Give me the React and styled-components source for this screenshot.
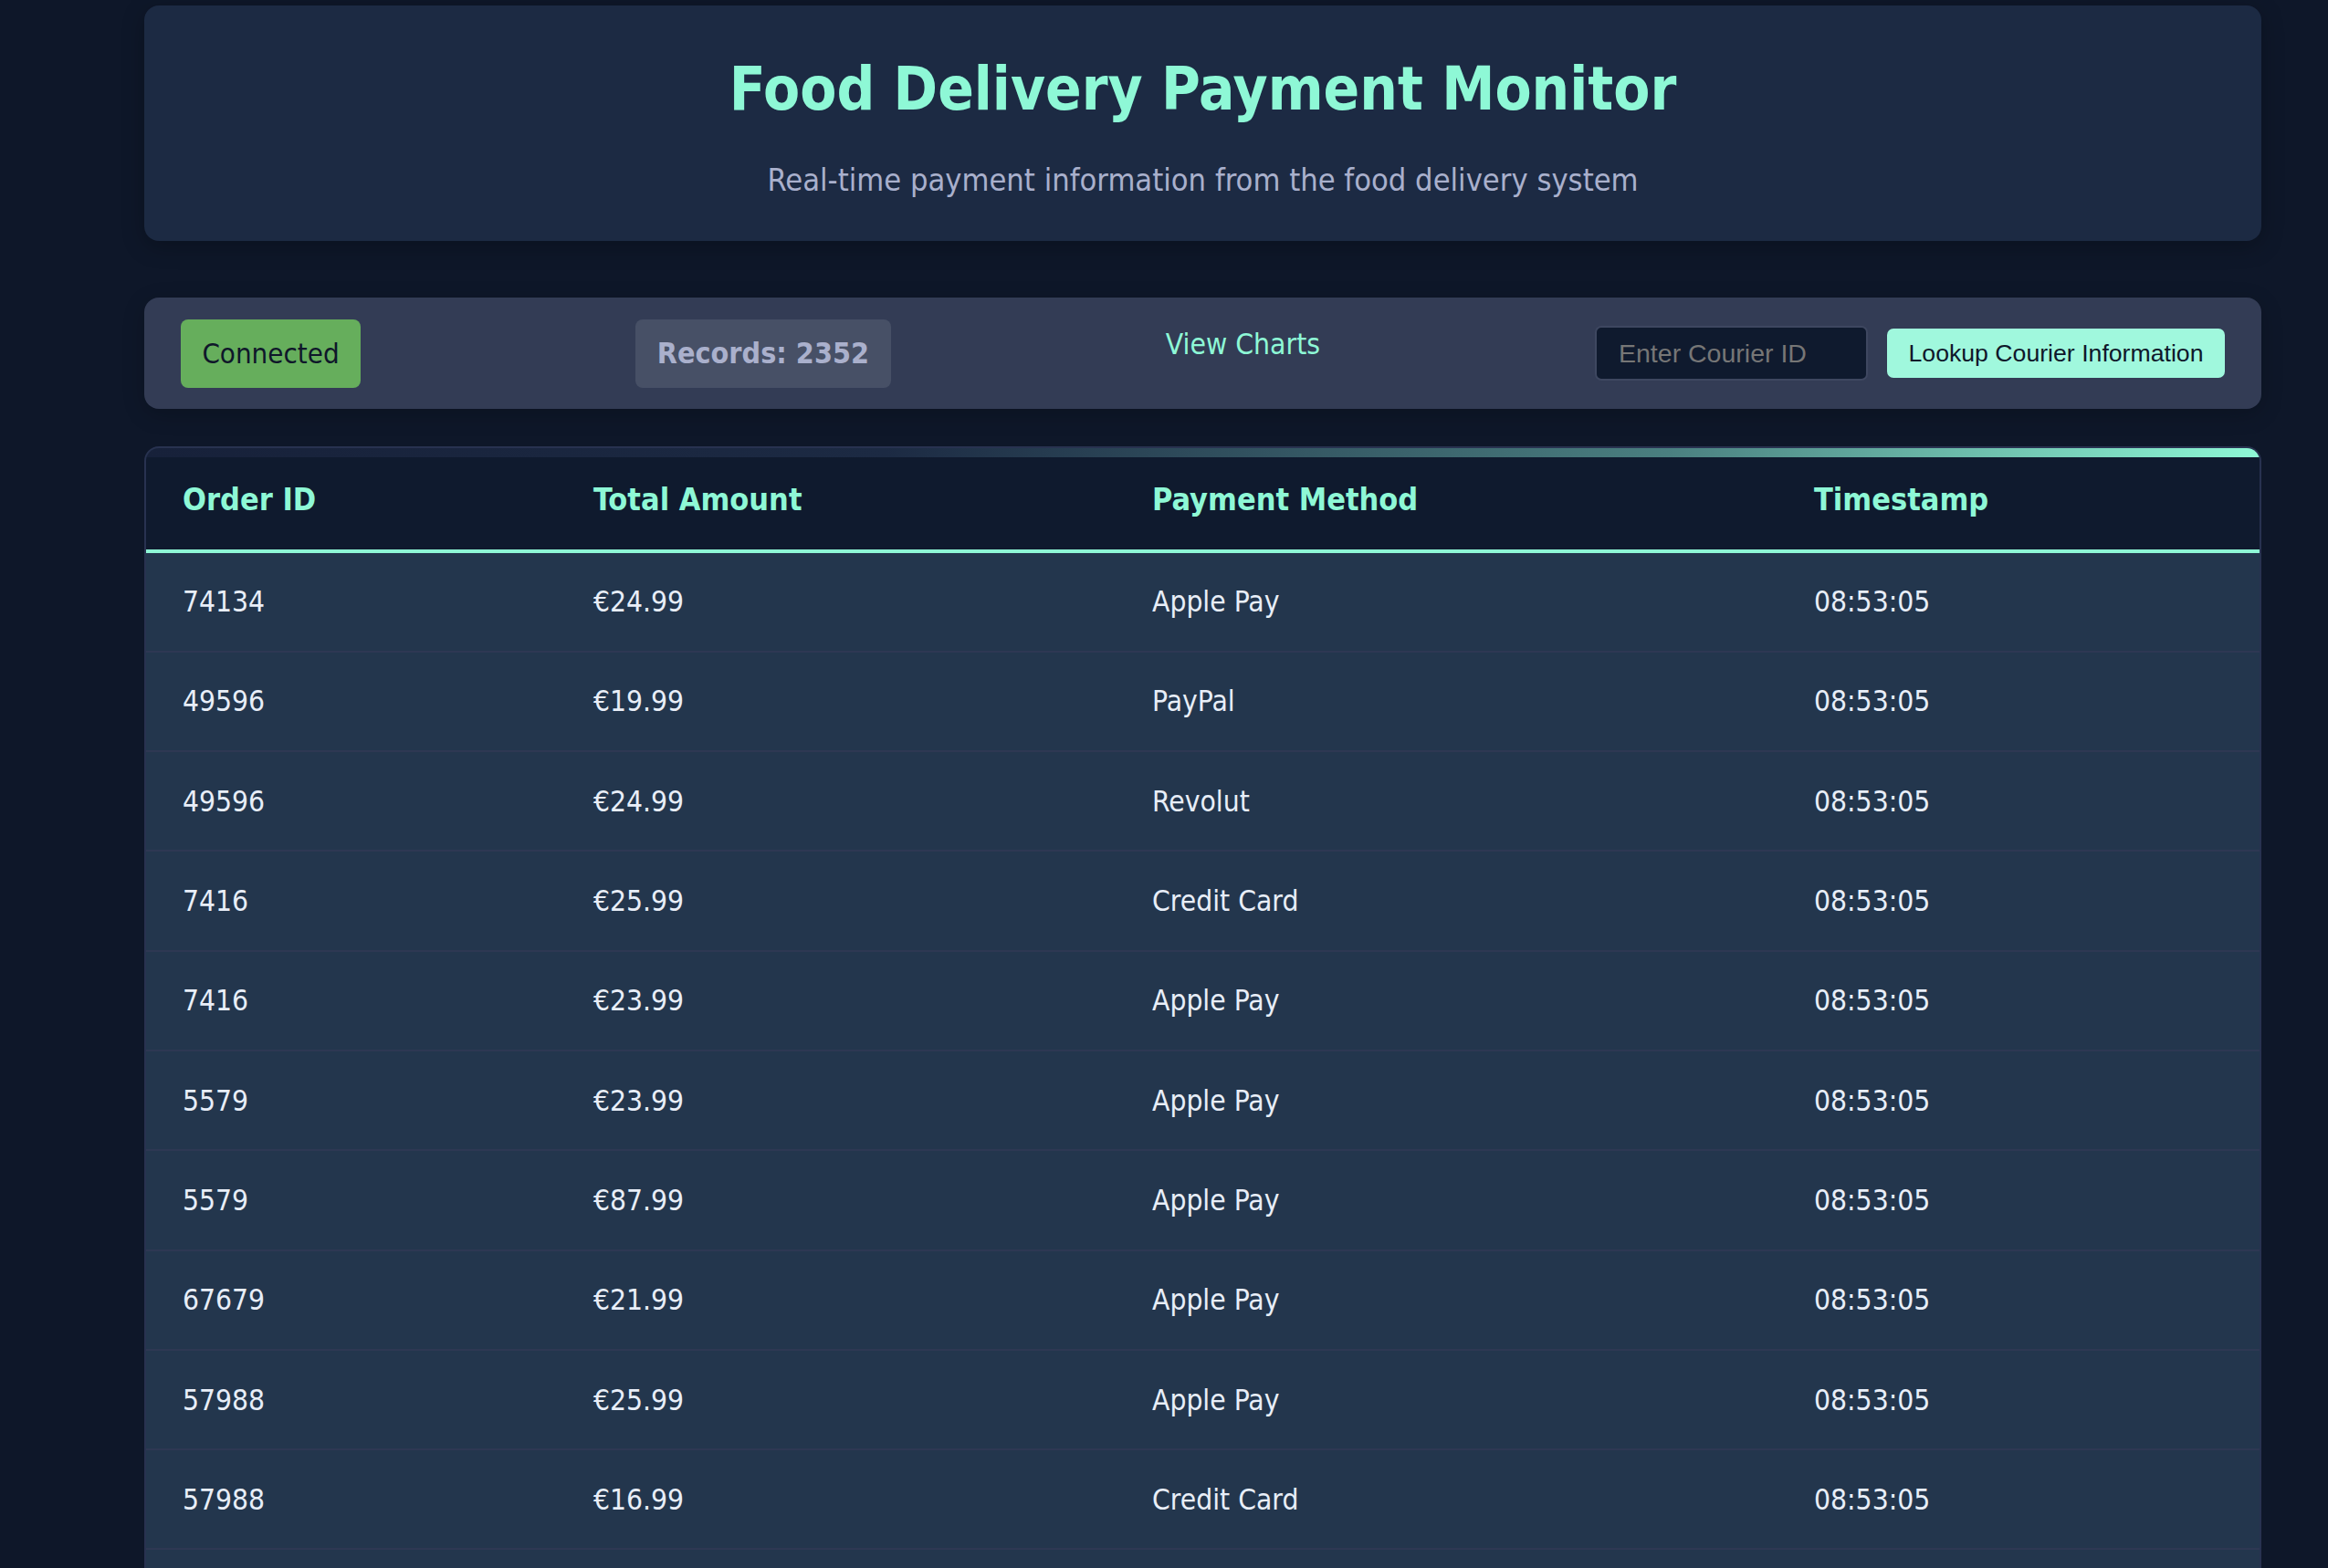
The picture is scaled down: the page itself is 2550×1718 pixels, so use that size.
import React from "react";
import styled, { createGlobalStyle } from "styled-components";

const GlobalStyle = createGlobalStyle`
  html, body { margin: 0; padding: 0; background: #0e1729; }
  body {
    font-family: "DejaVu Sans Condensed", "DejaVu Sans", sans-serif;
    font-stretch: condensed;
    color: #e8eef8;
  }
`;

const Page = styled.div`
  padding: 6px 73px 0 158px;
  display: flex;
  flex-direction: column;
`;

const HeaderCard = styled.header`
  background: #1c2a43;
  border-radius: 16px;
  padding: 54px 40px 47px;
  text-align: center;
  box-shadow: 0 6px 24px rgba(0, 0, 0, 0.25);
`;

const Title = styled.h1`
  margin: 0 0 42px;
  font-size: 65px;
  font-weight: 700;
  color: #8ef8d6;
  line-height: normal;
`;

const Subtitle = styled.p`
  margin: 0;
  font-size: 34.2px;
  color: #a9b0cc;
  line-height: normal;
`;

const ControlBar = styled.div`
  margin-top: 62px;
  background: #333c55;
  border-radius: 16px;
  height: 122px;
  box-sizing: border-box;
  padding: 0 40px;
  display: flex;
  align-items: center;
  justify-content: space-between;
  box-shadow: 0 6px 24px rgba(0, 0, 0, 0.2);
`;

const StatusBadge = styled.div`
  height: 75px;
  width: 197px;
  box-sizing: border-box;
  border-radius: 8px;
  background: #66ae5c;
  color: #0f172a;
  font-size: 31px;
  display: flex;
  align-items: center;
  justify-content: center;
`;

const CountBadge = styled.div`
  height: 75px;
  width: 280px;
  box-sizing: border-box;
  border-radius: 8px;
  background: #475066;
  color: #aab0cc;
  font-size: 32px;
  font-weight: 700;
  display: flex;
  align-items: center;
  justify-content: center;
`;

const ChartLink = styled.a`
  color: #8ef8d6;
  font-size: 31.6px;
  text-decoration: none;
  margin-bottom: 20px;
  cursor: pointer;
`;

const LookupGroup = styled.div`
  display: flex;
  align-items: center;
  gap: 21px;
`;

const CourierInput = styled.input`
  width: 299px;
  height: 60px;
  box-sizing: border-box;
  background: #0f1a2e;
  border: 2px solid #3e4760;
  border-radius: 7px;
  padding: 0 24px;
  font-family: "Liberation Sans", Arial, sans-serif;
  font-size: 28.5px;
  color: #e8eef8;
  outline: none;
  &::placeholder { color: #767676; }
`;

const LookupButton = styled.button`
  width: 370px;
  height: 54px;
  border: none;
  border-radius: 7px;
  background: #a0f8dd;
  color: #0f172a;
  font-family: "Liberation Sans", Arial, sans-serif;
  font-size: 26.67px;
  padding: 0;
  cursor: pointer;
`;

const TableCard = styled.section`
  margin-top: 41px;
  border: 2px solid #283250;
  border-bottom: none;
  border-radius: 16px 16px 0 0;
  overflow: hidden;
  background: #23364d;
`;

const Accent = styled.div`
  height: 10px;
  background: linear-gradient(90deg, #17213a 0%, #1c2a43 35%, #4a7f80 72%, #8ef8d6 100%);
`;

const Table = styled.table`
  width: 100%;
  border-collapse: collapse;
  table-layout: fixed;
`;

const Col = styled.col`
  width: ${(p) => p.$w};
`;

const HeadCell = styled.th`
  background: #0f1a2e;
  color: #8ef8d6;
  font-size: 34px;
  font-weight: 700;
  text-align: left;
  vertical-align: top;
  height: 102.5px;
  box-sizing: border-box;
  padding: 26px 0 0 40px;
  border-bottom: 4px solid #8ef8d6;
`;

const Row = styled.tr`
  background: #23364d;
  border-bottom: 2px solid #2e3853;
`;

const Cell = styled.td`
  height: 107.3px;
  padding: 0 0 0 40px;
  font-size: 31.5px;
  color: #e8eef8;
`;

const rows = [
  ["74134", "€24.99", "Apple Pay", "08:53:05"],
  ["49596", "€19.99", "PayPal", "08:53:05"],
  ["49596", "€24.99", "Revolut", "08:53:05"],
  ["7416", "€25.99", "Credit Card", "08:53:05"],
  ["7416", "€23.99", "Apple Pay", "08:53:05"],
  ["5579", "€23.99", "Apple Pay", "08:53:05"],
  ["5579", "€87.99", "Apple Pay", "08:53:05"],
  ["67679", "€21.99", "Apple Pay", "08:53:05"],
  ["57988", "€25.99", "Apple Pay", "08:53:05"],
  ["57988", "€16.99", "Credit Card", "08:53:05"],
  ["31845", "€22.99", "PayPal", "08:53:05"],
];

export default function App() {
  return (
    <>
      <GlobalStyle />
      <Page>
        <HeaderCard>
          <Title>Food Delivery Payment Monitor</Title>
          <Subtitle>Real-time payment information from the food delivery system</Subtitle>
        </HeaderCard>
        <ControlBar>
          <StatusBadge>Connected</StatusBadge>
          <CountBadge>Records: 2352</CountBadge>
          <ChartLink>View Charts</ChartLink>
          <LookupGroup>
            <CourierInput placeholder="Enter Courier ID" />
            <LookupButton>Lookup Courier Information</LookupButton>
          </LookupGroup>
        </ControlBar>
        <TableCard>
          <Accent />
          <Table>
            <colgroup>
              <Col $w="450px" />
              <Col $w="612px" />
              <Col $w="725px" />
              <Col $w="auto" />
            </colgroup>
            <thead>
              <tr>
                <HeadCell>Order ID</HeadCell>
                <HeadCell>Total Amount</HeadCell>
                <HeadCell>Payment Method</HeadCell>
                <HeadCell>Timestamp</HeadCell>
              </tr>
            </thead>
            <tbody>
              {rows.map((r, i) => (
                <Row key={i}>
                  {r.map((c, j) => (
                    <Cell key={j}>{c}</Cell>
                  ))}
                </Row>
              ))}
            </tbody>
          </Table>
        </TableCard>
      </Page>
    </>
  );
}
